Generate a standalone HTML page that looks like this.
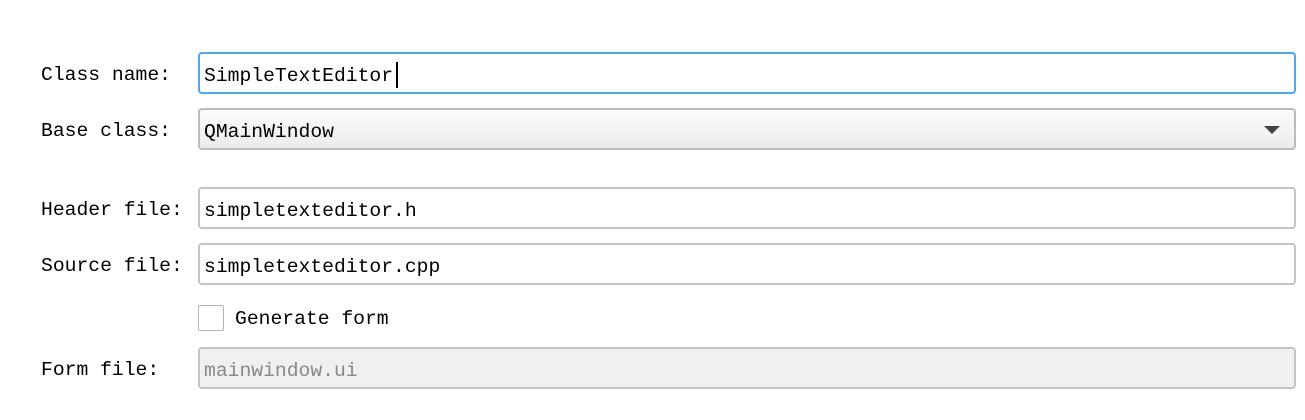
<!DOCTYPE html>
<html><head><style>
body{margin:0;width:1305px;height:420px;background:#fff;position:relative;font-family:"Liberation Mono","Noto Sans CJK SC",monospace;font-size:19.7px;color:#000;overflow:hidden}
.l{position:absolute;left:41px;line-height:20px}
.b{position:absolute;left:198px;width:1098px;height:42px;box-sizing:border-box;border:1px solid #b4b4b4;border-radius:4px;background:#fff}
.b span{position:absolute;left:5px;top:10px;line-height:22px}
</style></head><body>
<div class="l" style="top:65px">Class name:</div>
<div class="b" style="top:52px;border:2px solid #4aa8f4"><span style="left:4px;top:11px">SimpleTextEditor</span><div style="position:absolute;left:196px;top:8px;width:2px;height:26px;background:#000"></div></div>
<div class="l" style="top:121px">Base class:</div>
<div class="b" style="top:108px;border:2px solid #bcbcbc;background:linear-gradient(#fbfbfb,#ececec)"><span style="left:4px;top:11px">QMainWindow</span><div style="position:absolute;right:14px;top:16px;border-left:8px solid transparent;border-right:8px solid transparent;border-top:8px solid #444"></div></div>
<div class="l" style="top:200px">Header file:</div>
<div class="b" style="top:187px;border:2px solid #c4c4c4"><span style="left:4px;top:11px">simpletexteditor.h</span></div>
<div class="l" style="top:256px">Source file:</div>
<div class="b" style="top:243px;border:2px solid #c4c4c4"><span style="left:4px;top:11px">simpletexteditor.cpp</span></div>
<div style="position:absolute;left:198px;top:305px;width:26px;height:26px;box-sizing:border-box;border:1px solid #b4b4b4;border-radius:2px"></div>
<div class="l" style="left:235px;top:309px">Generate form</div>
<div class="l" style="top:360px">Form file:</div>
<div class="b" style="top:347px;border:2px solid #c4c4c4;background:#f0f0f0;color:#888"><span style="left:4px;top:11px">mainwindow.ui</span></div>
</body></html>
